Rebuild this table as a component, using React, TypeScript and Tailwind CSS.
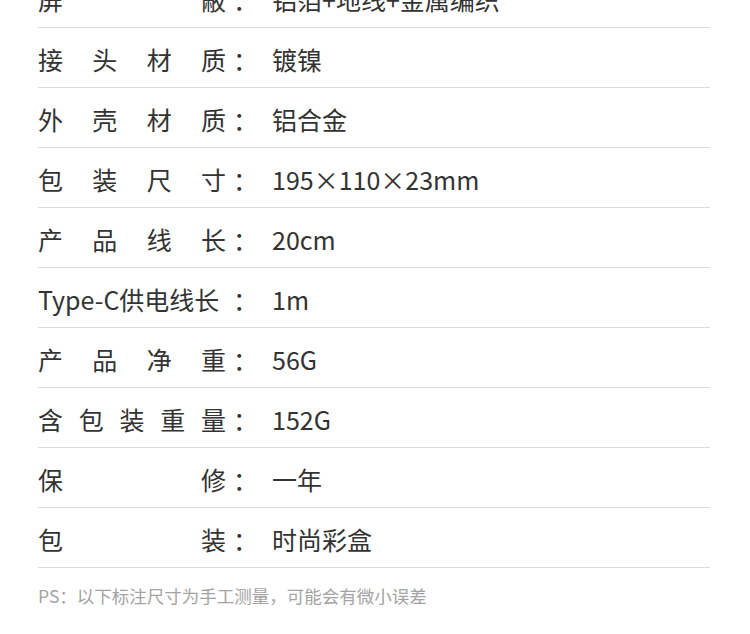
import React from 'react'

const specs: { label: string[]; value: string }[] = [
  { label: ['屏', '蔽'], value: '铝箔+地线+金属编织' },
  { label: ['接', '头', '材', '质'], value: '镀镍' },
  { label: ['外', '壳', '材', '质'], value: '铝合金' },
  { label: ['包', '装', '尺', '寸'], value: '195×110×23mm' },
  { label: ['产', '品', '线', '长'], value: '20cm' },
  { label: ['Type-C供电线长'], value: '1m' },
  { label: ['产', '品', '净', '重'], value: '56G' },
  { label: ['含', '包', '装', '重', '量'], value: '152G' },
  { label: ['保', '修'], value: '一年' },
  { label: ['包', '装'], value: '时尚彩盒' },
]

export default function App() {
  return (
    <div
      className="w-[750px] h-[634px] overflow-hidden bg-white text-[#333333]"
      style={{ fontFamily: '"Noto Sans CJK SC", "Noto Sans", sans-serif' }}
    >
      <div className="pl-[38px] pr-[40px]">
        <div className="-mt-[32px]">
          {specs.map((row, i) => (
            <div key={i} className="h-[60px] flex items-center border-b border-[#dcdcdc] text-[25px] leading-none pt-[3px]">
              <div className="w-[188px] flex justify-between whitespace-nowrap">
                {row.label.map((c, j) => (
                  <span key={j}>{c}</span>
                ))}
              </div>
              <span className="w-[24px] pl-[7px] whitespace-nowrap">：</span>
              <span className="ml-[22px] whitespace-nowrap">{row.value}</span>
            </div>
          ))}
        </div>
        <p className="pt-[19px] text-[17.5px] leading-none text-[#a3a3a3] whitespace-nowrap">
          PS：以下标注尺寸为手工测量，可能会有微小误差
        </p>
      </div>
    </div>
  )
}
